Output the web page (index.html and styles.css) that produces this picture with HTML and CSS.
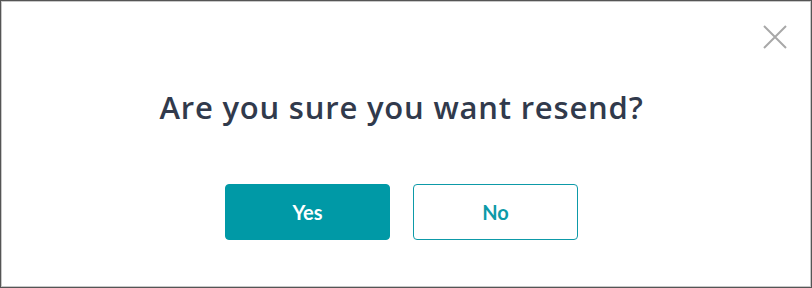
FILE: index.html
```html
<!DOCTYPE html>
<html lang="en">
<head>
<meta charset="utf-8">
<title>Resend confirmation</title>
<link rel="stylesheet" href="styles.css">
</head>
<body>
<div class="dialog">
  <button class="close" aria-label="Close">
    <svg width="26" height="26" viewBox="0 0 26 26"><path d="M2 2 L24 24 M24 2 L2 24" stroke="#a8a8a8" stroke-width="2" fill="none"/></svg>
  </button>
  <h1 class="title">Are you sure you want resend?</h1>
  <div class="actions">
    <button class="btn btn-primary">Yes</button>
    <button class="btn btn-outline">No</button>
  </div>
</div>
</body>
</html>
```
FILE: styles.css
```css
html, body { margin: 0; padding: 0; background: #fff; }
.dialog {
  position: relative;
  box-sizing: border-box;
  width: 812px;
  height: 288px;
  border: 1px solid #555;
  box-shadow: inset 0 0 0 1px #c8c8c8;
  display: flex;
  flex-direction: column;
  align-items: center;
  padding: 84px 9px 0 0;
}
.close {
  position: absolute;
  top: 23px;
  right: 23px;
  padding: 0;
  border: 0;
  background: none;
  width: 26px;
  height: 26px;
}
.close svg { display: block; }
.title {
  margin: 0;
  font-family: "Open Sans", "Lato", sans-serif;
  font-weight: 600;
  font-size: 31px;
  line-height: 44px;
  color: #313a4c;
  letter-spacing: 0.8px;
}
.actions {
  display: flex;
  gap: 23px;
  margin-top: 55px;
}
.btn {
  box-sizing: border-box;
  width: 165px;
  height: 56px;
  border-radius: 4px;
  font-family: "Lato", sans-serif;
  font-weight: 700;
  font-size: 20px;
  padding-bottom: 2px;
}
.btn-primary {
  background: #0099a6;
  border: 1px solid #0099a6;
  color: #fff;
}
.btn-outline {
  background: #fff;
  border: 1px solid #0d9aa8;
  color: #0d9aa8;
}
```
